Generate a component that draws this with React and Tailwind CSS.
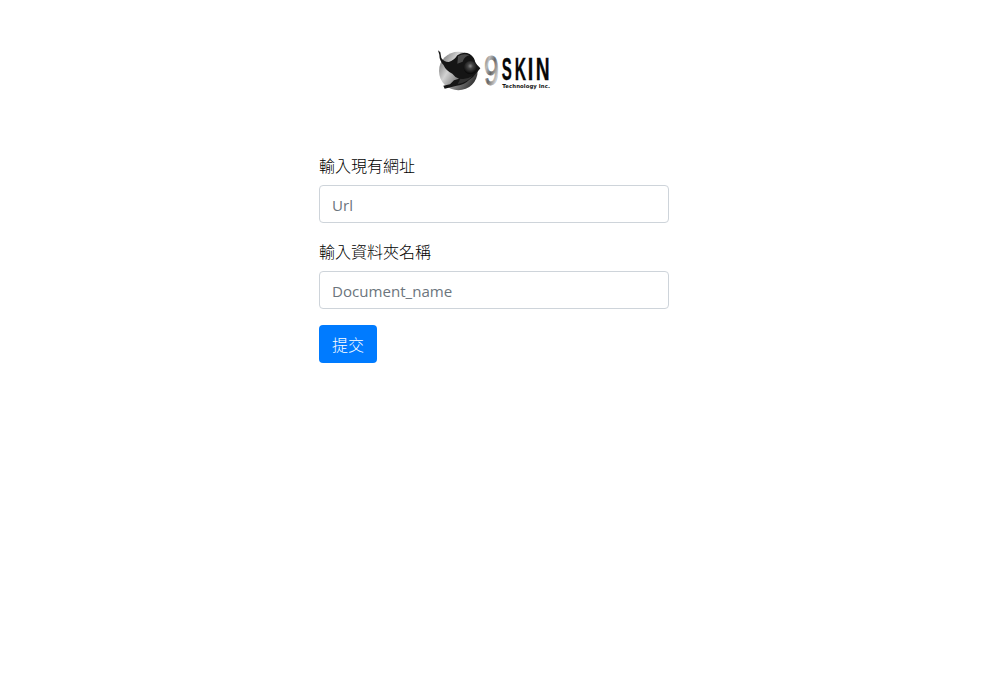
function Logo() {
  return (
    <svg className="h-[60px] w-[130px]" viewBox="0 0 390 180" role="img" aria-label="9SKIN Technology Inc.">
      <defs>
        <linearGradient id="globe" x1="0" y1="0.2" x2="1" y2="0.8">
          <stop offset="0" stopColor="#777" />
          <stop offset="0.3" stopColor="#d2d2d2" />
          <stop offset="0.55" stopColor="#8c8c8c" />
          <stop offset="0.8" stopColor="#555" />
          <stop offset="1" stopColor="#222" />
        </linearGradient>
        <radialGradient id="ball" cx="0.5" cy="0.38" r="0.55">
          <stop offset="0" stopColor="#8a8a8a" />
          <stop offset="0.35" stopColor="#444" />
          <stop offset="1" stopColor="#0c0c0c" />
        </radialGradient>
        <linearGradient id="chrome" x1="0" y1="0" x2="1" y2="1">
          <stop offset="0" stopColor="#444" />
          <stop offset="0.3" stopColor="#bbb" />
          <stop offset="0.5" stopColor="#666" />
          <stop offset="0.75" stopColor="#ccc" />
          <stop offset="1" stopColor="#555" />
        </linearGradient>
      </defs>
      <circle cx="85" cy="93" r="58" fill="url(#globe)" />
      <path d="M24 31 L31 37 L34 54 Q42 66 56 66 Q72 62 82 46 Q100 33 119 42 Q134 51 136 69 L151 85 L140 98 Q132 110 118 119 Q104 134 80 137 L44 146 L40 137 L60 133 L72 121 L87 116 Q75 112 67 101 Q48 92 40 74 Q28 61 28 44 Z" fill="#151515" />
      <path d="M84 49 Q101 38 118 46 Q104 48 98 65 L82 71 Z" fill="#4b4b4b" />
      <path d="M91 116 Q111 119 127 108 Q112 128 83 132 Z" fill="#333" />
      <circle cx="121" cy="83" r="20" fill="url(#ball)" />
      <g fontFamily='"Liberation Sans", Arial, sans-serif' fontWeight="bold">
        <text transform="translate(162 136) scale(0.82 1.28)" fontSize="98" fontWeight="normal" fill="url(#chrome)" stroke="url(#chrome)" strokeWidth="2">9</text>
        <g fill="#080808" stroke="#080808" strokeWidth="1" fontSize="96">
          <text transform="translate(215 121) scale(0.47 1)">S</text>
          <text transform="translate(254 121) scale(0.49 1)">K</text>
          <text transform="translate(293 121) scale(0.62 1)">I</text>
          <text transform="translate(317 121) scale(0.6 1)">N</text>
        </g>
        <text x="217" y="144" fontFamily='"DejaVu Sans", Verdana, sans-serif' fontSize="16" fill="#111" textLength="143">Technology Inc.</text>
      </g>
    </svg>
  );
}

function Field({ label, placeholder }) {
  return (
    <div className="mb-4">
      <label className="mb-1.5 block h-6 font-['Liberation_Sans','Noto_Sans_CJK_TC',sans-serif] text-base font-light leading-6 text-black">
        {label}
      </label>
      <input
        type="text"
        placeholder={placeholder}
        className="block h-[38px] w-full rounded border border-[#ced4da] bg-white px-3 pb-1.5 pt-2 font-['Open_Sans',sans-serif] text-[15.1px] leading-6 placeholder:text-[#6c757d]"
      />
    </div>
  );
}

export default function App() {
  return (
    <main className="min-h-screen bg-white pl-1 pt-10">
      <form className="mx-auto w-[350px]" onSubmit={(e) => e.preventDefault()}>
        <div className="mb-[55px] flex justify-center pl-0.5">
          <Logo />
        </div>
        <div className="flex flex-col">
          <Field label="輸入現有網址" placeholder="Url" />
          <div className="mt-0.5">
            <Field label="輸入資料夾名稱" placeholder="Document_name" />
          </div>
        </div>
        <button
          type="submit"
          className="block h-[38px] w-[58px] rounded bg-[#007bff] pt-1 font-['Liberation_Sans','Noto_Sans_CJK_TC',sans-serif] text-base font-light leading-6 text-white"
        >
          提交
        </button>
      </form>
    </main>
  );
}
